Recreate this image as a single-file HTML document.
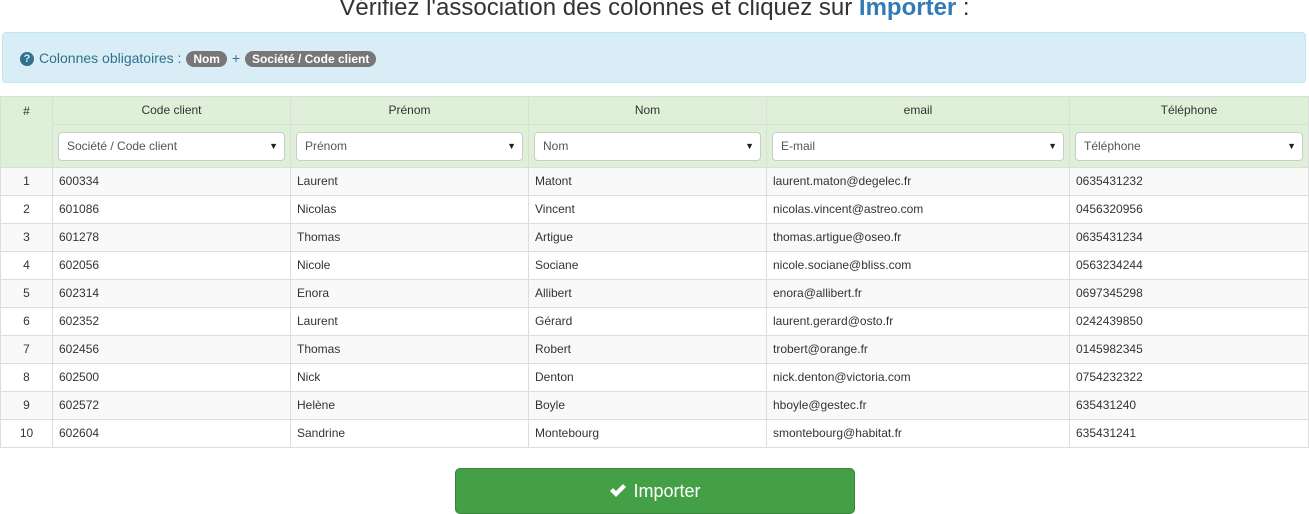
<!DOCTYPE html>
<html><head><meta charset="utf-8"><style>
*{box-sizing:border-box}
body{margin:0;width:1309px;height:514px;overflow:hidden;background:#fff;font-family:"Liberation Sans",Arial,sans-serif;font-size:12px;color:#333;position:relative}
h1{position:absolute;top:-7px;left:0;width:1309px;margin:0;text-align:center;font-weight:normal;font-size:24px;line-height:30px;color:#333}
h1 b{color:#337ab7}
.alert{position:absolute;left:2px;top:32px;width:1304px;height:51px;background:#d9edf7;border:1px solid #bce8f1;border-radius:4px;color:#31708f;font-size:14px;padding:17px 0 0 17px;line-height:16px}
.q{display:inline-block;width:14px;height:14px;border-radius:50%;background:#31708f;color:#d9edf7;font-size:11px;font-weight:bold;text-align:center;line-height:14px;vertical-align:1px;margin-right:5px}
.badge{display:inline-block;background:#777;color:#fff;font-weight:bold;font-size:12px;border-radius:10px;padding:1px 7px;line-height:14px;margin:0 1px}
table{position:absolute;left:0;top:96px;border-collapse:collapse;width:1309px;table-layout:fixed}
td,th{border:1px solid #ddd;padding:0 6px 1px;height:28px;font-weight:normal}
th{background:#dff0d8;text-align:center}
.sel td{height:43px;background:#dff0d8;padding:0 5px}
.s{height:29px;background:#fff;border:1px solid #ccc;border-radius:4px;position:relative;padding:0 0 0 8px;line-height:27px;color:#555;text-align:left}
.s:after{content:"▼";position:absolute;right:6px;top:0;font-size:9px;color:#222}
tbody tr:nth-child(odd) td{background:#f9f9f9}
td.n{text-align:center}
.btn{position:absolute;left:455px;top:468px;width:400px;height:46px;background:#43a047;border:1px solid #398439;border-radius:5px;color:#fff;font-size:18px;text-align:center;line-height:44px}
</style></head><body>
<h1>Vérifiez l'association des colonnes et cliquez sur <b>Importer</b> :</h1>
<div class="alert"><span class="q">?</span>Colonnes obligatoires : <span class="badge">Nom</span> + <span class="badge">Société / Code client</span></div>
<table>
<colgroup><col style="width:52px"><col style="width:238px"><col style="width:238px"><col style="width:238px"><col style="width:303px"><col style="width:239px"></colgroup>
<thead>
<tr><th rowspan="2" style="vertical-align:top;padding-top:7px">#</th><th>Code client</th><th>Prénom</th><th>Nom</th><th>email</th><th>Téléphone</th></tr>
<tr class="sel"><td><div class="s">Société / Code client</div></td><td><div class="s">Prénom</div></td><td><div class="s">Nom</div></td><td><div class="s">E-mail</div></td><td><div class="s">Téléphone</div></td></tr>
</thead>
<tbody>
<tr><td class="n">1</td><td>600334</td><td>Laurent</td><td>Matont</td><td>laurent.maton@degelec.fr</td><td>0635431232</td></tr>
<tr><td class="n">2</td><td>601086</td><td>Nicolas</td><td>Vincent</td><td>nicolas.vincent@astreo.com</td><td>0456320956</td></tr>
<tr><td class="n">3</td><td>601278</td><td>Thomas</td><td>Artigue</td><td>thomas.artigue@oseo.fr</td><td>0635431234</td></tr>
<tr><td class="n">4</td><td>602056</td><td>Nicole</td><td>Sociane</td><td>nicole.sociane@bliss.com</td><td>0563234244</td></tr>
<tr><td class="n">5</td><td>602314</td><td>Enora</td><td>Allibert</td><td>enora@allibert.fr</td><td>0697345298</td></tr>
<tr><td class="n">6</td><td>602352</td><td>Laurent</td><td>Gérard</td><td>laurent.gerard@osto.fr</td><td>0242439850</td></tr>
<tr><td class="n">7</td><td>602456</td><td>Thomas</td><td>Robert</td><td>trobert@orange.fr</td><td>0145982345</td></tr>
<tr><td class="n">8</td><td>602500</td><td>Nick</td><td>Denton</td><td>nick.denton@victoria.com</td><td>0754232322</td></tr>
<tr><td class="n">9</td><td>602572</td><td>Helène</td><td>Boyle</td><td>hboyle@gestec.fr</td><td>635431240</td></tr>
<tr><td class="n">10</td><td>602604</td><td>Sandrine</td><td>Montebourg</td><td>smontebourg@habitat.fr</td><td>635431241</td></tr>
</tbody></table>
<div class="btn"><svg width="18" height="15" viewBox="0 0 18 15" style="vertical-align:-1px;margin-right:6px"><path d="M1 8 L4 5 L7 8 L14 1 L17 4 L7 14 Z" fill="#fff"/></svg>Importer</div>
</body></html>
